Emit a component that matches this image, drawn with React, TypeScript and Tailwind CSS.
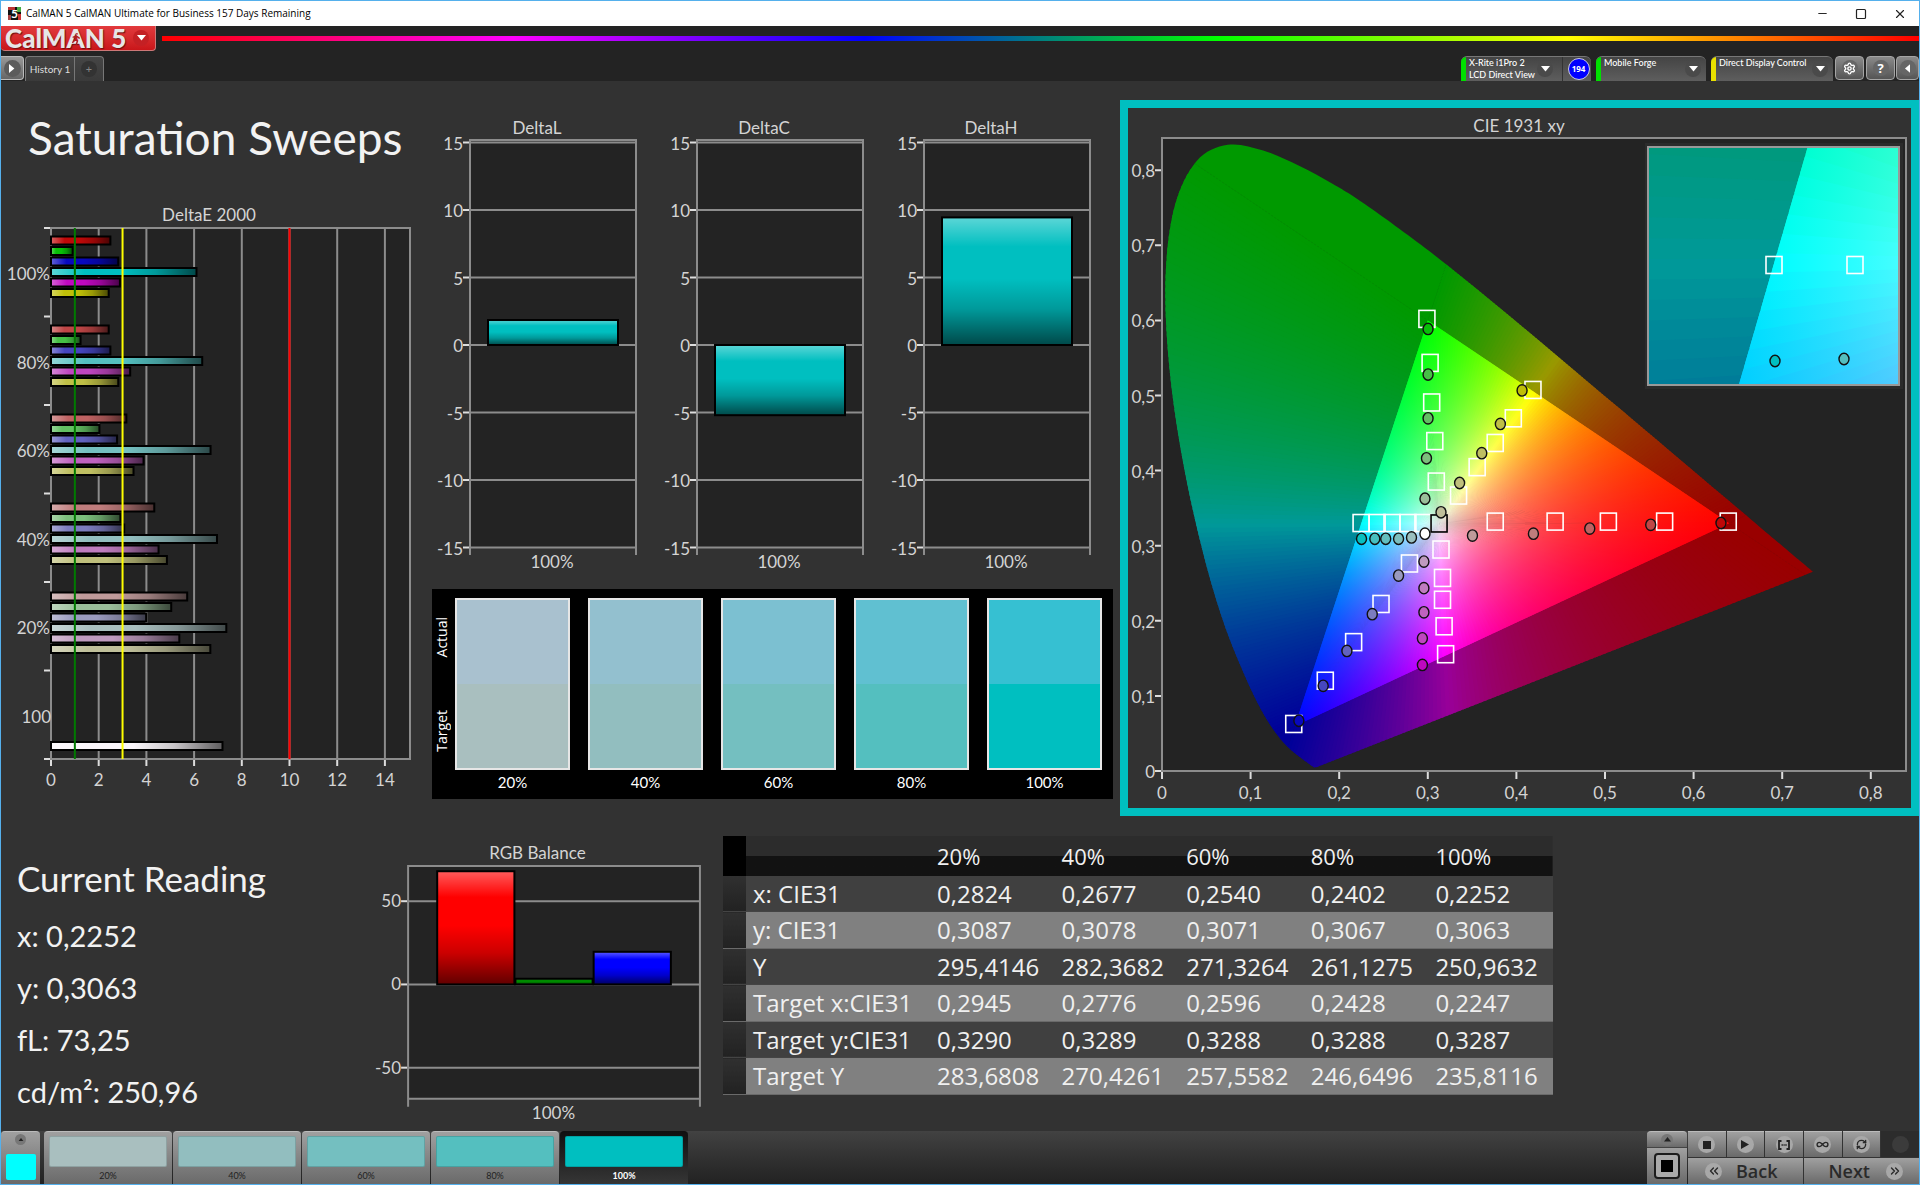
import React from "react";
import { Settings, Infinity as InfinityIcon, RefreshCw, ChevronsLeft, ChevronsRight, Minus, Square, X } from "lucide-react";

const levels = ["20%", "40%", "60%", "80%", "100%"];
const targetColors = ["#a9bfbf", "#92bebf", "#74bfc0", "#54bfbf", "#00bfc0"];
const actualColors = ["#a9c1cf", "#93c0cf", "#7cc0d1", "#60c0d1", "#36c0d2"];

/* ---------- shared chart parts ---------- */

const GRID = "#8c8c8c";
const PLOT = "#232323";

function GlossyBar(p: { id: string; color: string; x: number; y: number; w: number; h: number; across?: boolean }) {
  return (
    <g>
      <defs>
        <linearGradient id={p.id} x1="0" y1="0" x2={p.across ? "1" : "0"} y2={p.across ? "0" : "1"}>
          <stop offset="0" stopColor="#fff" stopOpacity="0.36" />
          <stop offset="0.23" stopColor="#fff" stopOpacity="0" />
          <stop offset="0.48" stopColor="#000" stopOpacity="0" />
          <stop offset="0.72" stopColor="#000" stopOpacity="0.2" />
          <stop offset="1" stopColor="#000" stopOpacity="0.62" />
        </linearGradient>
      </defs>
      <rect x={p.x} y={p.y} width={p.w} height={p.h} fill={p.color} />
      <rect x={p.x} y={p.y} width={p.w} height={p.h} fill={`url(#${p.id})`} stroke="#000" strokeWidth="2" />
    </g>
  );
}

/* ---------- DeltaE 2000 ---------- */

const tint = (mask: number[], low: number) => `rgb(${mask.map((m) => (m ? 191 : low)).join(",")})`;
const HUES = [
  [1, 0, 0],
  [0, 1, 0],
  [0, 0, 1],
  [0, 1, 1],
  [1, 0, 1],
  [1, 1, 0],
];
const LOWS = [8, 70, 98, 124, 154];

const deltaE = [
  { label: "100%", values: [2.49, 0.91, 2.82, 6.1, 2.89, 2.42] },
  { label: "80%", values: [2.42, 1.24, 2.49, 6.34, 3.32, 2.82] },
  { label: "60%", values: [3.16, 2.03, 2.77, 6.69, 3.88, 3.46] },
  { label: "40%", values: [4.33, 2.91, 3.07, 6.96, 4.51, 4.86] },
  { label: "20%", values: [5.71, 5.04, 3.99, 7.35, 5.38, 6.68] },
];

function DeltaEChart() {
  const left = 50;
  const right = 409;
  const top = 32;
  const bottom = 563;
  const sx = (v: number) => left + v * 23.85;
  const band = (bottom - top) / 6;
  return (
    <svg viewBox="0 0 429 610" className="block w-full" role="img" aria-label="DeltaE 2000" fontFamily="Lato, sans-serif" fontSize="17" fill="#d4d4d4">
      <text x="208" y="25" textAnchor="middle">DeltaE 2000</text>
      <rect x={left} y={top} width={right - left} height={bottom - top} fill={PLOT} />
      {[0, 2, 4, 6, 8, 10, 12, 14].map((v) => (
        <g key={v}>
          <path d={`M${sx(v)} ${top}V${bottom}`} stroke={GRID} strokeWidth="2" />
          <path d={`M${sx(v)} ${bottom}v7`} stroke="#ddd" strokeWidth="2" />
          <text x={sx(v)} y="590" textAnchor="middle">{v}</text>
        </g>
      ))}
      <rect x={left} y={top} width={right - left} height={bottom - top} fill="none" stroke={GRID} strokeWidth="2" />
      {[0, 1, 2, 3, 4, 5, 6].map((i) => (
        <path key={i} d={`M${left - 7} ${top + i * band}h6`} stroke="#ddd" strokeWidth="2" />
      ))}
      {deltaE.map((g, gi) => (
        <g key={g.label}>
          <text x={left - 1} y={84 + gi * band} textAnchor="end">{g.label}</text>
          {g.values.map((v, i) => (
            <GlossyBar
              key={i}
              across
              id={`de${gi}-${i}`}
              color={i === 3 ? targetColors[4 - gi] : tint(HUES[i], LOWS[gi])}
              x={left}
              y={40.5 + gi * 89 + i * 10.5}
              w={sx(v) - left}
              h={8}
            />
          ))}
        </g>
      ))}
      <text x={left} y="527" textAnchor="end">100</text>
      <GlossyBar across id="de-white" color="#f8f4f8" x={left} y={546} w={sx(7.19) - left} h={8} />
      <path d={`M${sx(1)} ${top}V${bottom}`} stroke="#007a00" strokeWidth="2" />
      <path d={`M${sx(3)} ${top}V${bottom}`} stroke="#ffff00" strokeWidth="2" />
      <path d={`M${sx(10)} ${top}V${bottom}`} stroke="#ff0000" strokeWidth="2" />
    </svg>
  );
}

/* ---------- DeltaL / DeltaC / DeltaH ---------- */

function DeltaChart({ title, value }: { title: string; value: number }) {
  const zero = 233;
  const sy = (v: number) => zero - v * 13.5;
  const y = Math.min(sy(value), zero);
  return (
    <svg viewBox="0 0 227 464" className="block w-full" role="img" aria-label={title} fontFamily="Lato, sans-serif" fontSize="17" fill="#d4d4d4">
      <text x="107" y="22" textAnchor="middle">{title}</text>
      <rect x="40" y="28" width="166" height="407" fill={PLOT} />
      {[15, 10, 5, 0, -5, -10, -15].map((v) => (
        <g key={v}>
          <path d={`M40 ${sy(v)}h166`} stroke={GRID} strokeWidth="2" />
          <path d={`M33 ${sy(v)}h6`} stroke="#ddd" strokeWidth="2" />
          <text x="33" y={sy(v) + 7} textAnchor="end">{v}</text>
        </g>
      ))}
      <path d="M40 443V28H206V443" fill="none" stroke={GRID} strokeWidth="2" />
      <GlossyBar id={title} color="#00bfc0" x={58} y={y} w={130} h={Math.abs(value) * 13.5} />
      <text x="122" y="456" textAnchor="middle">100%</text>
    </svg>
  );
}

/* ---------- RGB balance ---------- */

function RgbBalance() {
  const zero = 153;
  const sy = (v: number) => zero - v * 1.66;
  const bars = [
    { color: "#ff0000", v: 68 },
    { color: "#008a00", v: 3.4 },
    { color: "#0000ff", v: 19.6 },
  ];
  return (
    <svg viewBox="0 0 352 298" className="block w-full" role="img" aria-label="RGB Balance" fontFamily="Lato, sans-serif" fontSize="17" fill="#d4d4d4">
      <text x="167" y="28" textAnchor="middle">RGB Balance</text>
      <rect x="38" y="35" width="291" height="232" fill={PLOT} />
      {[50, 0, -50].map((v) => (
        <g key={v}>
          <path d={`M38 ${sy(v)}h291`} stroke={GRID} strokeWidth="2" />
          <path d={`M31 ${sy(v)}h6`} stroke="#ddd" strokeWidth="2" />
          <text x="31" y={sy(v) + 6} textAnchor="end">{v}</text>
        </g>
      ))}
      <path d="M38 275V35H329V275M38 267H329" fill="none" stroke={GRID} strokeWidth="2" />
      {bars.map((b, i) => (
        <GlossyBar key={i} id={`rgb${i}`} color={b.color} x={67 + i * 78} y={sy(b.v)} w={77} h={zero - sy(b.v)} />
      ))}
      <text x="183" y="287" textAnchor="middle">100%</text>
    </svg>
  );
}

/* ---------- CIE 1931 chromaticity diagram ---------- */

type P = [number, number];
const SX = 886;
const SY = 751;
const R: P = [0.64, 0.33];
const G: P = [0.3, 0.6];
const B: P = [0.15, 0.06];
const W: P = [0.3127, 0.329];
const px = (p: P) => `${(p[0] * SX).toFixed(2)} ${(-p[1] * SY).toFixed(2)}`;
const mix = (a: P, b: P, t: number): P => [a[0] + (b[0] - a[0]) * t, a[1] + (b[1] - a[1]) * t];

function colorAt([x, y]: P, gain = 1) {
  const X = x / y;
  const Z = (1 - x - y) / y;
  const rgb = [
    3.2406 * X - 1.5372 - 0.4986 * Z,
    -0.9689 * X + 1.8758 + 0.0415 * Z,
    0.0557 * X - 0.204 + 1.057 * Z,
  ].map((c) => Math.max(0, c));
  const max = Math.max(...rgb);
  return `rgb(${rgb.map((c) => Math.round((c / max) * 255 * gain)).join(",")})`;
}

const locus: P[] = [
  [0.1741, 0.005], [0.1714, 0.0051], [0.1689, 0.0069], [0.1644, 0.0109], [0.1566, 0.0177], [0.144, 0.0297],
  [0.1355, 0.0399], [0.1241, 0.0578], [0.1096, 0.0868], [0.0913, 0.1327], [0.0687, 0.2007], [0.0454, 0.295],
  [0.0235, 0.4127], [0.0082, 0.5384], [0.0039, 0.6548], [0.0139, 0.7502], [0.0389, 0.812], [0.0743, 0.8338],
  [0.1142, 0.8262], [0.1547, 0.8059], [0.1929, 0.7816], [0.2296, 0.7543], [0.3016, 0.6923], [0.3731, 0.6245],
  [0.4441, 0.5547], [0.5125, 0.4866], [0.5752, 0.4242], [0.627, 0.3725], [0.6658, 0.334], [0.6915, 0.3083],
  [0.719, 0.2809], [0.7347, 0.2653],
];

const locusPath =
  locus.reduce((d, p, i) => {
    if (i === 0) return `M${px(p)}`;
    const p0 = locus[Math.max(0, i - 2)];
    const p1 = locus[i - 1];
    const p3 = locus[Math.min(locus.length - 1, i + 1)];
    const c1: P = [p1[0] + (p[0] - p0[0]) / 6, p1[1] + (p[1] - p0[1]) / 6];
    const c2: P = [p[0] - (p3[0] - p1[0]) / 6, p[1] - (p3[1] - p1[1]) / 6];
    return `${d}C${px(c1)} ${px(c2)} ${px(p)}`;
  }, "") + "Z";

const STEPS = 120;
const STOPS = [0, 0.04, 0.08, 0.14, 0.2, 0.3, 0.4, 0.5, 0.6, 0.7, 0.8, 0.9, 1];
const edges: [P, P, P][] = [
  [R, G, B],
  [G, B, R],
  [B, R, G],
];

function GamutDefs() {
  const gradients: React.ReactNode[] = [];
  const inner: React.ReactNode[] = [];
  const outer: React.ReactNode[] = [];
  const far = (from: P, through: P) => mix(from, through, 5);

  edges.forEach(([a, b, opposite], e) => {
    outer.push(
      <path key={`corner${e}`} d={`M${px(a)}L${px(far(b, a))}L${px(far(opposite, a))}Z`} fill={colorAt(a, 0.6)} stroke={colorAt(a, 0.6)} />,
    );
    for (let i = 0; i < STEPS; i++) {
      const mid = mix(a, b, (i + 0.5) / STEPS);
      const start = mix(a, b, (i - 0.3) / STEPS);
      const end = mix(a, b, (i + 1.6) / STEPS);
      const id = `ray${e}-${i}`;
      gradients.push(
        <linearGradient key={id} id={id} gradientUnits="userSpaceOnUse" x1={W[0] * SX} y1={-W[1] * SY} x2={mid[0] * SX} y2={-mid[1] * SY}>
          {STOPS.map((u) => (
            <stop key={u} offset={u} stopColor={colorAt(mix(W, mid, u))} />
          ))}
        </linearGradient>,
      );
      inner.push(<path key={id} d={`M${px(W)}L${px(mix(W, start, 1.05))}L${px(mix(W, end, 1.05))}Z`} fill={`url(#${id})`} />);
      outer.push(
        <path
          key={id}
          d={`M${px(opposite)}L${px(far(opposite, mix(a, b, i / STEPS)))}L${px(far(opposite, mix(a, b, Math.min(1, (i + 1.6) / STEPS))))}Z`}
          fill={colorAt(mid, 0.6)}
        />,
      );
    }
  });

  // Each fan is confined to the half plane beyond its own edge.
  const corners = outer.filter((_, i) => i % (STEPS + 1) === 0);
  const fans = edges.map((_, e) => outer.slice(e * (STEPS + 1) + 1, (e + 1) * (STEPS + 1)));

  return (
    <defs>
      <clipPath id="locus">
        <path d={locusPath} />
      </clipPath>
      <clipPath id="gamut">
        <path d={`M${px(R)}L${px(G)}L${px(B)}Z`} />
      </clipPath>
      {edges.map(([a, b, o], e) => (
        <clipPath id={`beyond${e}`} key={e}>
          <path d={`M${px(mix(o, a, 0.98))}L${px(far(o, a))}L${px(far(o, b))}L${px(mix(o, b, 0.98))}Z`} />
        </clipPath>
      ))}
      {gradients}
      <g id="chromaticity" clipPath="url(#locus)">
        {corners}
        {fans.map((f, e) => (
          <g key={e} clipPath={`url(#beyond${e})`}>{f}</g>
        ))}
        <g clipPath="url(#gamut)">{inner}</g>
      </g>
    </defs>
  );
}

const targets: P[] = [
  [0.299, 0.602], [0.3026, 0.5434], [0.3044, 0.4907], [0.3079, 0.4393], [0.3096, 0.3854],
  [0.4187, 0.5074], [0.3965, 0.4696], [0.3761, 0.4368], [0.3557, 0.4046], [0.3347, 0.3668],
  [0.6391, 0.3321], [0.5673, 0.3321], [0.5038, 0.3321], [0.4437, 0.3321], [0.3761, 0.3321],
  [0.2247, 0.3302], [0.2428, 0.3302], [0.2596, 0.3302], [0.2776, 0.3302], [0.2945, 0.3302],
  [0.3149, 0.2949], [0.3166, 0.2571], [0.3166, 0.228], [0.3184, 0.1927], [0.3201, 0.1555],
  [0.2793, 0.2763], [0.2472, 0.2224], [0.2163, 0.1716], [0.1843, 0.1202], [0.1487, 0.0626],
];

const readings: { mask: number[]; points: P[] }[] = [
  { mask: [0, 1, 0], points: [[0.3003, 0.5886], [0.3003, 0.5279], [0.3003, 0.4696], [0.2985, 0.4164], [0.2968, 0.3625]] },
  { mask: [1, 1, 0], points: [[0.4064, 0.5068], [0.3819, 0.4622], [0.3609, 0.4232], [0.3359, 0.3835], [0.3149, 0.3445]] },
  { mask: [1, 0, 0], points: [[0.6309, 0.3302], [0.5516, 0.3278], [0.4828, 0.3228], [0.4192, 0.316], [0.3504, 0.3135]] },
  { mask: [0, 1, 1], points: [[0.2252, 0.3092], [0.2402, 0.3092], [0.2525, 0.3092], [0.267, 0.3092], [0.2816, 0.311]] },
  { mask: [1, 0, 1], points: [[0.2939, 0.1413], [0.2939, 0.1766], [0.2956, 0.2113], [0.2956, 0.2435], [0.2956, 0.2788]] },
  { mask: [0, 0, 1], points: [[0.1545, 0.0669], [0.1819, 0.1134], [0.2087, 0.1599], [0.2373, 0.2088], [0.267, 0.2602]] },
];

function TargetMark({ x, y, color = "#fff" }: { x: number; y: number; color?: string }) {
  return <rect x={x - 8} y={y - 8.5} width="16" height="17" fill="none" stroke={color} strokeWidth="1.6" />;
}
function ReadingMark({ x, y, fill }: { x: number; y: number; fill: string }) {
  return <ellipse cx={x} cy={y} rx="5" ry="5.7" fill={fill} stroke="#111" strokeWidth="1.4" />;
}

function CieChart() {
  const left = 34;
  const bottom = 663;
  const X = (v: number) => left + v * SX;
  const Y = (v: number) => bottom - v * SY;
  const ticks = [0, 1, 2, 3, 4, 5, 6, 7, 8];
  const name = (n: number) => (n ? `0,${n}` : "0");
  return (
    <svg viewBox="0 0 783 700" className="block w-full" role="img" aria-label="CIE 1931 xy" fontFamily="Lato, sans-serif" fontSize="17" fill="#d4d4d4">
      <GamutDefs />
      <text x="391" y="24" textAnchor="middle">CIE 1931 xy</text>
      <rect x={left} y="30" width="744" height={bottom - 30} fill={PLOT} stroke={GRID} strokeWidth="2" />
      {ticks.map((n) => (
        <g key={n}>
          <path d={`M${X(n / 10)} ${bottom + 1}v7M${left - 1} ${Y(n / 10)}h-6`} stroke="#ddd" strokeWidth="2" />
          <text x={X(n / 10)} y="691" textAnchor="middle">{name(n)}</text>
          <text x={left - 7} y={Y(n / 10) + 7} textAnchor="end">{name(n)}</text>
        </g>
      ))}
      <use href="#chromaticity" transform={`translate(${left} ${bottom})`} />
      {targets.map(([x, y], i) => (
        <TargetMark key={i} x={X(x)} y={Y(y)} />
      ))}
      <TargetMark x={X(0.3127)} y={Y(0.3296)} color="#000" />
      {readings.map((s, si) =>
        s.points.map(([x, y], i) => <ReadingMark key={`${si}-${i}`} x={X(x)} y={Y(y)} fill={tint(s.mask, LOWS[i])} />),
      )}
      <ReadingMark x={X(0.2968)} y={Y(0.316)} fill="#fff" />
      <g>
        <rect x="517" y="35" width="258" height="246" fill="#2b2b2b" />
        <svg x="520" y="39" width="251" height="238" viewBox="0 0 251 238">
          <g transform="translate(-881 1532) scale(5.058 5.73)">
            <use href="#chromaticity" />
          </g>
        </svg>
        <rect x="520" y="39" width="251" height="238" fill="none" stroke="#999" strokeWidth="2" />
        <TargetMark x={646} y={157} />
        <TargetMark x={727} y={157} />
        <ReadingMark x={647} y={253} fill="#00bfc0" />
        <ReadingMark x={716} y={251} fill="#54bfbf" />
      </g>
    </svg>
  );
}

/* ---------- swatches and table ---------- */

function Swatches() {
  return (
    <section aria-label="Actual and target colors" className="ml-[2px] mr-[6px] mt-[13px] flex bg-black pb-1 pr-[11px] pt-[9px] font-['Open_Sans',sans-serif] text-white">
      <div className="grid h-[172px] w-[23px] shrink-0 grid-rows-2 pr-[3px] text-[14px] font-medium leading-5">
        <span className="rotate-180 place-self-center pt-2 [writing-mode:vertical-rl]">Actual</span>
        <span className="rotate-180 place-self-center pb-2 [writing-mode:vertical-rl]">Target</span>
      </div>
      <div className="grid flex-1 grid-cols-5 gap-[18px]">
        {levels.map((l, i) => (
          <div key={l}>
            <div className="h-[172px] border-2 border-white/90">
              <div className="h-1/2" style={{ background: actualColors[i] }} />
              <div className="h-1/2" style={{ background: targetColors[i] }} />
            </div>
            <div className="text-center font-[Lato,sans-serif] text-[15px] leading-[25px]">{l}</div>
          </div>
        ))}
      </div>
    </section>
  );
}

const rows = [
  ["x: CIE31", "0,2824", "0,2677", "0,2540", "0,2402", "0,2252"],
  ["y: CIE31", "0,3087", "0,3078", "0,3071", "0,3067", "0,3063"],
  ["Y", "295,4146", "282,3682", "271,3264", "261,1275", "250,9632"],
  ["Target x:CIE31", "0,2945", "0,2776", "0,2596", "0,2428", "0,2247"],
  ["Target y:CIE31", "0,3290", "0,3289", "0,3288", "0,3288", "0,3287"],
  ["Target Y", "283,6808", "270,4261", "257,5582", "246,6496", "235,8116"],
];

function ReadingsTable() {
  return (
    <table className="mt-5 h-[259px] w-full table-fixed border-collapse self-start text-left font-['Open_Sans',sans-serif] text-[24px] leading-[34px] text-[#f0f0f0]">
      <colgroup>
        <col className="w-[23px]" />
        <col className="w-[184px]" />
        <col />
        <col />
        <col />
        <col />
        <col />
      </colgroup>
      <thead>
        <tr className="h-10 bg-linear-to-b from-[#2c2c2c] from-0% via-[#2c2c2c] via-50% to-[#121212] to-50%">
          <td className="bg-black" />
          <td />
          {levels.map((l) => (
            <th key={l} scope="col" className="pl-[7px] text-[22px] font-normal">{l}</th>
          ))}
        </tr>
      </thead>
      <tbody>
        {rows.map((r, i) => (
          <tr key={r[0]} className={"border-b " + (i % 2 ? "border-[#6a6a6a] bg-[#808080]" : "border-[#444] bg-[#404040]")}>
            <td className="bg-linear-to-b from-[#303030] to-[#222]" />
            {r.map((c, j) =>
              j === 0 ? (
                <th key={j} scope="row" className="whitespace-nowrap pl-[7px] font-normal">{c}</th>
              ) : (
                <td key={j} className="pl-[7px]">{c}</td>
              ),
            )}
          </tr>
        ))}
      </tbody>
    </table>
  );
}

/* ---------- window chrome ---------- */

function Caret({ className = "" }: { className?: string }) {
  return (
    <span className={"grid size-4 shrink-0 place-items-center rounded-full " + className}>
      <svg viewBox="0 0 10 6" className="w-[9px]"><path d="M0 0h10L5 6z" fill="#fff" /></svg>
    </span>
  );
}

function Device({ lines, bar, className, children }: { lines: string[]; bar: string; className: string; children?: React.ReactNode }) {
  return (
    <div className={"flex h-[25px] overflow-hidden rounded-t-md border-t border-[#777] bg-linear-to-b from-[#444] to-[#5e5e5e] " + className}>
      <span className={"w-[5px] shrink-0 " + bar} />
      <button className={"flex min-w-0 flex-1 items-center justify-between pl-[3px] text-left font-[Lato,sans-serif] text-[9px] font-medium leading-3 text-white " + (children ? "pr-[9px]" : "pr-[5px]")}>
        <span className="self-start whitespace-nowrap">
          {lines.map((l) => (
            <span key={l} className="block">{l}</span>
          ))}
        </span>
        <Caret className="bg-[#4a4a4a]" />
      </button>
      {children}
    </div>
  );
}

function ToolButton({ label, children, className = "" }: { label: string; children: React.ReactNode; className?: string }) {
  return (
    <button aria-label={label} className={"grid h-6 place-items-center rounded-sm border border-[#a5a5a5] bg-linear-to-b from-[#8a8a8a] to-[#555] " + className}>
      <span className="grid size-4 place-items-center rounded-full bg-[#666] text-white">{children}</span>
    </button>
  );
}

function Header() {
  return (
    <header className="bg-[#232323]">
      <div className="flex h-[25px] items-start bg-white">
        <div className="flex h-full items-center pl-[7px]">
          <svg viewBox="0 0 13 13" className="mr-[5px] size-[13px]">
            <rect width="13" height="13" fill="#111" />
            <path d="M0 0h7v3H0z" fill="#b33" />
            <path d="M9 0h4v5H9z" fill="#4a4" />
            <path d="M0 8h3v5H0z" fill="#a44" />
            <path d="M10 7h3v6h-3z" fill="#c33" />
            <text x="6.5" y="11" textAnchor="middle" fontSize="12" fontWeight="bold" fontFamily="Lato, sans-serif" fill="#fff">5</text>
          </svg>
          <h1 className="font-['Open_Sans',sans-serif] text-[10px] text-black">CalMAN 5 CalMAN Ultimate for Business 157 Days Remaining</h1>
        </div>
        <div className="ml-auto flex h-full items-center gap-[26px] pr-[12px] text-[#222]">
          <button aria-label="Minimize"><Minus size={13} strokeWidth={1.8} /></button>
          <button aria-label="Maximize"><Square size={12} strokeWidth={2.4} /></button>
          <button aria-label="Close"><X size={14} strokeWidth={2} /></button>
        </div>
      </div>
      <div className="flex h-[30px] items-start">
        <button aria-label="CalMAN 5 menu" className="flex h-[25px] w-[155px] items-center justify-between rounded-b border-b border-r border-[#c77] bg-linear-to-b from-[#e23a3d] to-[#c91519] pl-1 pr-[6px]">
          <span className="relative whitespace-nowrap font-[Lato,sans-serif] text-[26px] font-black leading-[20px] text-[#e6e6e6] [text-shadow:1px_1px_1px_#6b1010]">
            CalMAN 5
            <svg viewBox="0 0 10 14" className="absolute left-[66px] top-1 h-[13px] w-[10px]" fill="none" stroke="#b01c20" strokeWidth="1.600" strokeLinecap="round">
              <circle cx="6" cy="2" r="1" fill="#b01c20" stroke="none" />
              <path d="M5.500 4.500L4.500 8L6.500 10L5.500 13M4.500 8L1.500 11M2 5.500L5.500 4.500L8.500 6.500" />
            </svg>
          </span>
          <Caret className="bg-[#c42024]" />
        </button>
        <div className="ml-[6px] mt-[10px] h-[5px] flex-1 bg-[linear-gradient(to_right,#f00,#f0f_20%,#00f_40%,#0f0_60%,#ff0_80%,#f00)]" />
      </div>
      <div className="flex h-[25px]">
        <button aria-label="Show workflow" className="grid h-6 w-[23px] place-items-center rounded-r-sm border border-l-0 border-[#bbb] bg-linear-to-b from-[#999] to-[#666]">
          <span className="grid size-[17px] place-items-center rounded-full bg-[#5c5c5c]">
            <svg viewBox="0 0 6 10" className="h-[9px]"><path d="M0 0v10l6-5z" fill="#fff" /></svg>
          </span>
        </button>
        <div className="ml-[1px] flex rounded-t border border-b-0 border-[#777] bg-linear-to-b from-[#454545] to-[#3a3a3a] text-[#ddd]">
          <button className="w-[49px] border-r border-[#777] font-[Lato,sans-serif] text-[10px]">History 1</button>
          <button aria-label="Add tab" className="grid w-7 place-items-center">
            <span className="grid size-4 place-items-center rounded-full bg-[#333] text-[11px] leading-3 text-[#888]">+</span>
          </button>
        </div>
        <div className="ml-auto flex">
          <Device lines={["X-Rite i1Pro 2", "LCD Direct View"]} bar="bg-[#00e000]" className="w-[130px]">
            <span className="grid w-[29px] shrink-0 place-items-center border-l border-[#333] pl-[3px]">
              <span className="grid size-[22px] place-items-center rounded-full border border-[#ccd] bg-[#0000ff] font-['Open_Sans',sans-serif] text-[8px] font-bold text-white">194</span>
            </span>
          </Device>
          <Device lines={["Mobile Forge"]} bar="bg-[#00e000]" className="ml-[5px] w-[110px]" />
          <Device lines={["Direct Display Control"]} bar="bg-[#e8e000]" className="ml-[5px] w-[122px]" />
          <ToolButton label="Settings" className="ml-[2px] w-[29px]"><Settings size={13} strokeWidth={2.6} /></ToolButton>
          <ToolButton label="Help" className="ml-[2px] w-[29px]"><span className="text-[13px] font-bold leading-4">?</span></ToolButton>
          <ToolButton label="Collapse panel" className="ml-[1px] w-[23px]">
            <svg viewBox="0 0 6 10" className="h-[9px]"><path d="M6 0v10L0 5z" fill="#fff" /></svg>
          </ToolButton>
        </div>
      </div>
    </header>
  );
}

const steel = "bg-linear-to-b from-[#a0a0a0] to-[#6a6a6a] ";

function Round({ children }: { children?: React.ReactNode }) {
  return <span className="grid size-[17px] place-items-center rounded-full bg-[#a8a8a8] text-[#2a2a2a]">{children}</span>;
}

function Footer() {
  const tools: [string, React.ReactNode][] = [
    ["Stop", <span className="size-2 bg-[#222]" />],
    ["Play", <svg viewBox="0 0 8 9" className="h-[9px]"><path d="M0 0v9l8-4.500z" fill="#222" /></svg>],
    ["Read series", <svg viewBox="0 0 12 10" className="w-3"><path d="M3.500 1H1v8h2.500M8.500 1H11v8H8.500" fill="none" stroke="#222" strokeWidth="1.800" /><path d="M3.500 4.200h1.400v1.600H3.500zM5.500 4.200h1.200v1.600H5.500zM7.300 4.200h1.400v1.600H7.300z" fill="#222" /></svg>],
    ["Continuous", <InfinityIcon size={13} strokeWidth={2.6} />],
    ["Refresh", <RefreshCw size={11} strokeWidth={3} />],
  ];
  return (
    <footer className="flex h-[53px] bg-linear-to-b from-[#424242] to-[#222] font-[Lato,sans-serif]">
      <button aria-label="Pattern color" className={"flex w-[39px] flex-col items-center justify-between rounded-t border-t border-[#bbb] pb-1 pt-[2px] " + steel}>
        <span className="grid size-[11px] place-items-center rounded-full bg-[#777]"><svg viewBox="0 0 8 5" className="w-[6px]"><path d="M0 5h8L4 0z" fill="#222" /></svg></span>
        <span className="h-[26px] w-[30px] rounded-xs bg-[#00ffff]" />
      </button>
      <nav aria-label="Saturation levels" className="ml-1 flex gap-[1px]">
        {levels.map((l, i) => {
          const on = i === 4;
          return (
            <button
              key={l}
              aria-pressed={on}
              className={"flex w-32 flex-col rounded-t border-t px-[5px] pt-1 " + (on ? "border-[#111] bg-linear-to-b from-[#111] to-[#363636]" : "border-[#bbb] " + steel)}
            >
              <span className="block h-[31px] w-full rounded-xs border border-black/15" style={{ background: targetColors[i] }} />
              <span className={"w-full pt-[1px] text-center text-[9px] leading-4 " + (on ? "font-bold text-white" : "text-[#222]")}>{l}</span>
            </button>
          );
        })}
      </nav>
      <div className="ml-auto flex">
        <div className="flex w-10 flex-col">
          <button aria-label="Expand" className={"grid h-4 place-items-center rounded-t border-t border-[#bbb] " + steel}>
            <span className="grid size-3 place-items-center rounded-full bg-[#777]"><svg viewBox="0 0 8 5" className="w-[7px]"><path d="M0 5h8L4 0z" fill="#222" /></svg></span>
          </button>
          <button aria-label="Pattern window" className={"grid flex-1 place-items-center border-t border-[#444] " + steel}>
            <span className="grid size-[26px] place-items-center rounded-sm border-2 border-[#1c1c1c] bg-[#aaa]"><span className="size-3 bg-black" /></span>
          </button>
        </div>
        <div className="ml-[1px] flex w-[231px] flex-col gap-[1px] bg-[#333]">
          <div className="grid h-[26px] grid-cols-6 gap-[1px]">
            {tools.map(([label, icon]) => (
              <button key={label} aria-label={label} className={"grid place-items-center border-t border-[#bbb] " + steel}>
                <Round>{icon}</Round>
              </button>
            ))}
            <span className="grid place-items-center bg-[#2c2c2c]"><span className="size-[17px] rounded-full bg-[#3b3b3b]" /></span>
          </div>
          <div className="grid flex-1 grid-cols-2 gap-[1px] font-['Open_Sans',sans-serif] text-[18px] font-semibold leading-6 text-[#2a2a2a]">
            <button className={"flex items-center gap-[14px] pl-[17px] " + steel}>
              <Round><ChevronsLeft size={14} strokeWidth={2.4} /></Round>Back
            </button>
            <button className={"flex items-center justify-end gap-4 pr-[16px] " + steel}>
              Next<Round><ChevronsRight size={14} strokeWidth={2.4} /></Round>
            </button>
          </div>
        </div>
      </div>
    </footer>
  );
}

export default function App() {
  return (
    <div className="flex min-h-screen flex-col border border-[#55b0ec] bg-[#323232]">
      <Header />
      <main className="flex-1 text-[#f2f2f2]">
        <div className="grid grid-cols-[429fr_689fr_800fr]">
          <section>
            <h2 className="mb-7 ml-[27px] mt-[27px] whitespace-nowrap font-[Lato,sans-serif] text-[46px] leading-[60px]">Saturation Sweeps</h2>
            <DeltaEChart />
          </section>
          <section className="pt-[31px]">
            <div className="mr-2 grid grid-cols-3">
              <DeltaChart title="DeltaL" value={1.85} />
              <DeltaChart title="DeltaC" value={-5.2} />
              <DeltaChart title="DeltaH" value={9.45} />
            </div>
            <Swatches />
          </section>
          <section className="ml-[1px] mt-[19px] self-start border-8 border-[#00bfc0]">
            <CieChart />
          </section>
        </div>
        <div className="grid grid-cols-[369fr_353fr_830fr_366fr]">
          <section className="pl-4 pt-[39px] font-[Lato,sans-serif]">
            <h2 className="mb-[9px] whitespace-nowrap text-[35px] leading-[46px]">Current Reading</h2>
            <ul className="text-[29px] leading-[52px]">
              <li>x: 0,2252</li>
              <li>y: 0,3063</li>
              <li>fL: 73,25</li>
              <li>cd/m²: 250,96</li>
            </ul>
          </section>
          <section className="pt-[15px]">
            <RgbBalance />
          </section>
          <ReadingsTable />
        </div>
      </main>
      <Footer />
    </div>
  );
}
